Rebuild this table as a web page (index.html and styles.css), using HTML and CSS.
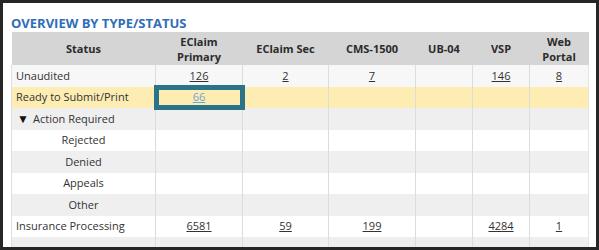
FILE: index.html
```html
<!DOCTYPE html>
<html>
<head>
<meta charset="utf-8">
<link rel="stylesheet" href="styles.css">
</head>
<body>
<div class="frame">
  <h2 class="title">OVERVIEW BY TYPE/STATUS</h2>
  <div class="table-wrap">
    <table class="grid">
      <colgroup>
        <col class="c-status"><col class="c-w87"><col class="c-w86"><col class="c-w87"><col class="c-w57"><col class="c-w57"><col class="c-last">
      </colgroup>
      <thead>
        <tr class="head">
          <th>Status</th>
          <th><span class="hl">EClaim</span><span class="hl">Primary</span></th>
          <th>EClaim Sec</th>
          <th>CMS-1500</th>
          <th>UB-04</th>
          <th>VSP</th>
          <th><span class="hl">Web</span><span class="hl">Portal</span></th>
        </tr>
      </thead>
      <tbody>
        <tr class="r-light">
          <td class="label">Unaudited</td>
          <td><a>126</a></td><td><a>2</a></td><td><a>7</a></td><td></td><td><a>146</a></td><td><a>8</a></td>
        </tr>
        <tr class="r-yellow">
          <td class="label">Ready to Submit/Print</td>
          <td class="hl-cell"><a class="visited">66</a><span class="hl-box"></span></td><td></td><td></td><td></td><td></td><td></td>
        </tr>
        <tr class="r-grey">
          <td class="label"><span class="tri">&#9660;</span>Action Required</td>
          <td></td><td></td><td></td><td></td><td></td><td></td>
        </tr>
        <tr class="r-white">
          <td class="sub">Rejected</td>
          <td></td><td></td><td></td><td></td><td></td><td></td>
        </tr>
        <tr class="r-grey">
          <td class="sub">Denied</td>
          <td></td><td></td><td></td><td></td><td></td><td></td>
        </tr>
        <tr class="r-white">
          <td class="sub">Appeals</td>
          <td></td><td></td><td></td><td></td><td></td><td></td>
        </tr>
        <tr class="r-grey">
          <td class="sub">Other</td>
          <td></td><td></td><td></td><td></td><td></td><td></td>
        </tr>
        <tr class="r-white">
          <td class="label">Insurance Processing</td>
          <td><a>6581</a></td><td><a>59</a></td><td><a>199</a></td><td></td><td><a>4284</a></td><td><a>1</a></td>
        </tr>
        <tr class="r-foot">
          <td></td><td></td><td></td><td></td><td></td><td></td><td></td>
        </tr>
      </tbody>
    </table>
  </div>
</div>
</body>
</html>
```
FILE: styles.css
```css
html, body {
  margin: 0;
  padding: 0;
  background: #262626;
}
body {
  width: 599px;
  height: 250px;
  overflow: hidden;
  font-family: "Open Sans", "Noto Sans", "Liberation Sans", sans-serif;
  color: #333;
}
.frame {
  margin: 3px 3px 0 3px;
  height: 244px;
  background: #fff;
  padding: 0 8px;
  box-sizing: border-box;
  overflow: hidden;
}
.title {
  margin: 0;
  padding-top: 11px;
  height: 18px;
  font-size: 13px;
  line-height: 18px;
  font-weight: 700;
  color: #2f6db8;
  letter-spacing: 0;
}
.table-wrap {
  width: 577px;
}
.grid {
  width: 577px;
  border-collapse: collapse;
  table-layout: fixed;
  font-size: 11px;
}
.c-status { width: 144px; }
.c-w87 { width: 87px; }
.c-w86 { width: 86px; }
.c-w57 { width: 57px; }
.c-last { width: 59px; }
.head th {
  background: #d5d5d5;
  height: 33px;
  padding: 0;
  font-weight: 700;
  font-size: 11px;
  line-height: 15px;
  color: #2b2b2b;
  text-align: center;
  vertical-align: middle;
}
.hl {
  display: block;
  height: 15px;
  line-height: 15px;
}
.grid td {
  height: 21.5px;
  padding: 0;
  text-align: center;
  vertical-align: middle;
  border-left: 1px solid #dcdcdc;
  line-height: 14px;
  white-space: nowrap;
}
.grid td:first-child {
  border-left: 1px solid #e0e0e0;
}
.grid tbody tr td:last-child {
  border-right: 1px solid #e6e6e6;
}
.grid td.label {
  text-align: left;
  padding-left: 4px;
}
.grid td.sub {
  text-align: center;
}
.grid a {
  color: #333;
  text-decoration: underline;
}
.grid a.visited {
  color: #6aa6d6;
}
.tri {
  font-size: 12px;
  display: inline-block;
  width: 16px;
  padding-left: 1px;
  color: #111;
}
.r-light td { background: #f7f7f7; }
.r-yellow td { background: #fdedb3; }
.r-grey td { background: #efefef; }
.r-white td { background: #ffffff; }
.r-foot td { background: #efefef; height: 12px; }
.hl-cell {
  position: relative;
}
.hl-box {
  position: absolute;
  left: -2px;
  top: -2px;
  width: 81px;
  height: 15px;
  border: 5px solid #2a7388;
  pointer-events: none;
}
```
